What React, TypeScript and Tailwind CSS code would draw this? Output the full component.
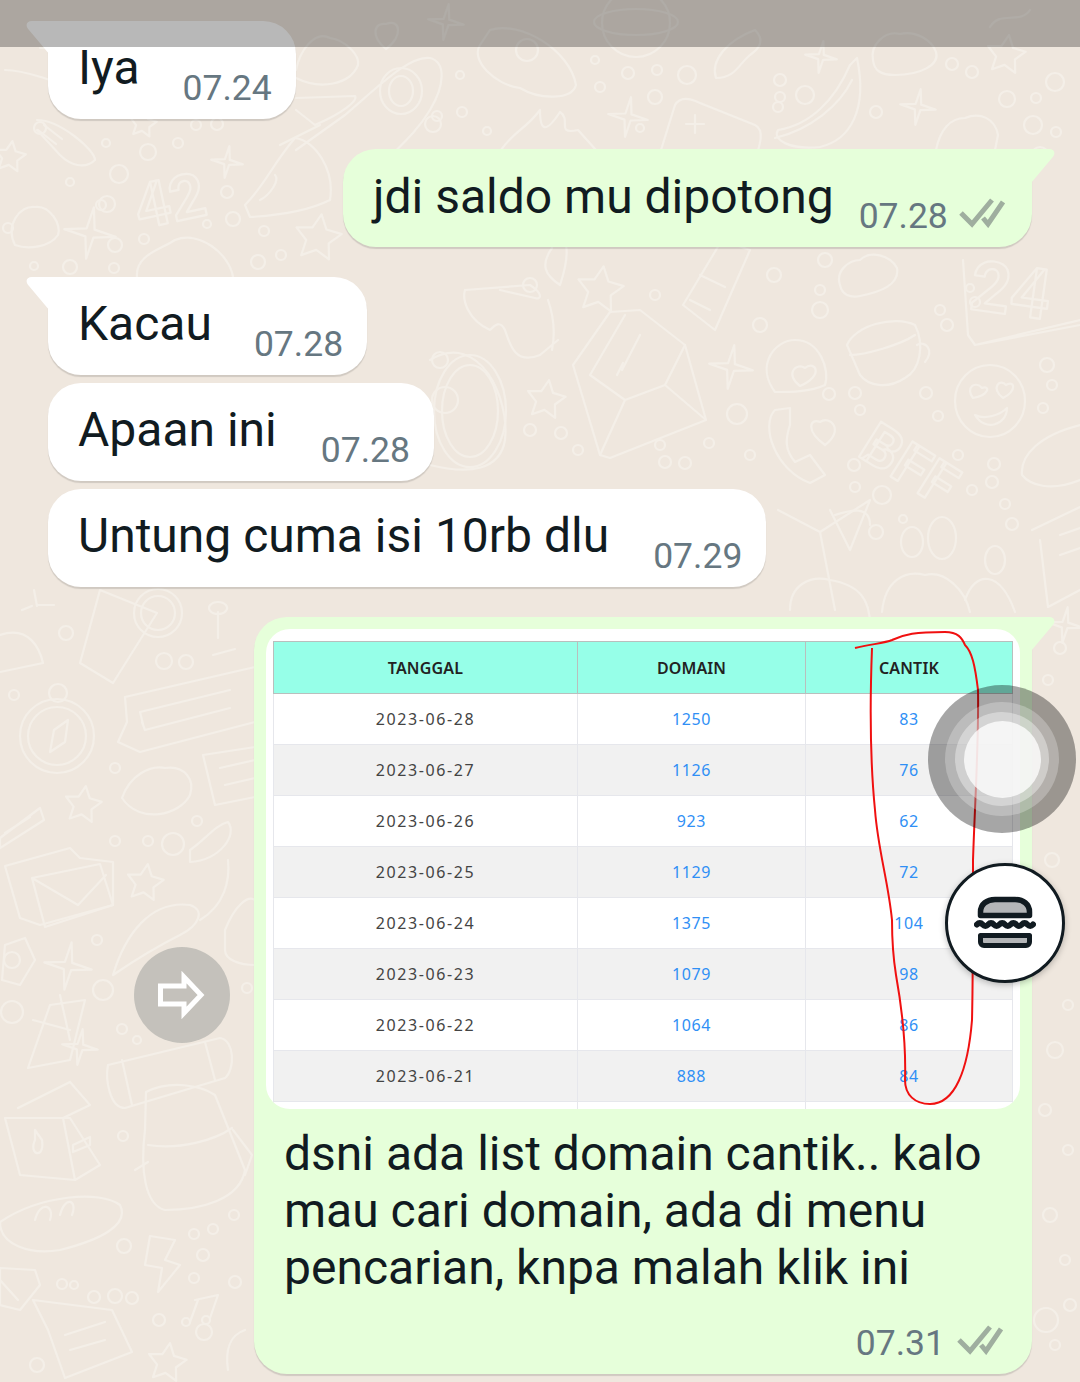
const font = "font-['Roboto',sans-serif]";

function Ticks({ className }: { className: string }) {
  return (
    <svg className={className} width="46" height="30" viewBox="0 0 46 30" fill="none" stroke="#9fae9f" strokeWidth="5">
      <path d="M2 15 L13 26 L33 2" />
      <path d="M24 20 L29 26 L44 4" />
    </svg>
  );
}

function TailLeft() {
  return (
    <svg className="absolute left-[-22px] top-0" width="24" height="34" viewBox="0 0 24 34">
      <path d="M24 0 H6 C0 0 -1 5 3 9 L24 34 Z" fill="#ffffff" />
    </svg>
  );
}

function TailRight() {
  return (
    <svg className="absolute right-[-23px] top-0" width="24" height="34" viewBox="0 0 24 34">
      <path d="M0 0 H18 C24 0 25 5 21 9 L0 34 Z" fill="#e6ffda" />
    </svg>
  );
}

function Incoming({ text, time, tail, timeGap, className }: { text: string; time: string; tail?: boolean; timeGap: string; className: string }) {
  return (
    <div className={`relative ml-12 flex h-[98px] w-fit rounded-[33px] bg-white pl-[30px] pr-[24px] shadow-[0_2px_1px_rgba(0,0,0,0.13)] ${tail ? 'rounded-tl-none' : ''} ${className}`}>
      {tail && <TailLeft />}
      <span className="mt-[19px] text-[48px] leading-[56px] text-[#111b21]">{text}</span>
      <span className={`mt-[46px] text-[35.5px] leading-[42px] text-[#667781] ${timeGap}`}>{time}</span>
    </div>
  );
}

const rows = [
  ['2023-06-28', '1250', '83'],
  ['2023-06-27', '1126', '76'],
  ['2023-06-26', '923', '62'],
  ['2023-06-25', '1129', '72'],
  ['2023-06-24', '1375', '104'],
  ['2023-06-23', '1079', '98'],
  ['2023-06-22', '1064', '86'],
  ['2023-06-21', '888', '84'],
];

function ScreenshotTable() {
  return (
    <div className="relative h-[480px] overflow-hidden rounded-[24px] bg-white pl-[7px] pr-[7px] pt-[12px] font-['Noto_Sans',sans-serif]">
      <div className="grid h-[53px] grid-cols-[304px_228px_208px] border border-[#b9bfbd] bg-[#96ffe8] text-[16px] font-semibold text-[#222]">
        <div className="flex items-center justify-center border-r border-[#b9bfbd] tracking-[0.2px]">TANGGAL</div>
        <div className="flex items-center justify-center border-r border-[#b9bfbd] tracking-[0.1px]">DOMAIN</div>
        <div className="flex items-center justify-center pr-[2px] tracking-[0.2px]">CANTIK</div>
      </div>
      {rows.map((r, i) => (
        <div key={r[0]} className={`grid h-[51px] grid-cols-[304px_228px_208px] border-x border-b border-[#e6e7ec] text-[16px] ${i % 2 ? 'bg-[#f1f1f1]' : 'bg-white'}`}>
          <div className="flex items-center justify-center border-r border-[#e6e7ec] tracking-[1.6px] text-[#444]">{r[0]}</div>
          <div className="flex items-center justify-center border-r border-[#e6e7ec] tracking-[0.6px] text-[#2f8ff5]">{r[1]}</div>
          <div className="flex items-center justify-center pr-[2px] tracking-[0.6px] text-[#2f8ff5]">{r[2]}</div>
        </div>
      ))}
      <div className="grid h-[20px] grid-cols-[304px_228px_208px] border-x border-[#e6e7ec]">
        <div className="border-r border-[#e6e7ec]" />
        <div className="border-r border-[#e6e7ec]" />
        <div />
      </div>
    </div>
  );
}

function starPath(x: number, y: number, r: number, inner: number, n: number) {
  let d = '';
  for (let i = 0; i < n * 2; i++) {
    const a = (Math.PI * i) / n - Math.PI / 2 + 0.15;
    const q = i % 2 ? r * inner : r;
    d += `${i ? 'L' : 'M'}${(x + q * Math.cos(a)).toFixed(1)} ${(y + q * Math.sin(a)).toFixed(1)} `;
  }
  return d + 'Z';
}

const stars = [[10, 157, 16], [318, 238, 24], [600, 290, 24], [546, 400, 20], [83, 805, 19], [145, 883, 19], [1006, 55, 20], [167, 1363, 20], [143, 124, 14]];
const sparkles = [[227, 162, 16], [90, 233, 26], [446, 22, 18], [628, 117, 20], [821, 57, 16], [918, 107, 18], [731, 367, 22], [68, 966, 24], [80, 1047, 18], [1065, 625, 18]];
const dots = [
  [40, 128, 6], [119, 174, 9], [70, 182, 4], [106, 143, 4], [148, 152, 8], [178, 143, 5], [217, 124, 6], [196, 125, 5],
  [107, 204, 8], [101, 205, 5], [207, 224, 4], [233, 219, 7], [227, 192, 6], [264, 231, 5], [115, 245, 7], [144, 239, 5],
  [258, 262, 7], [281, 255, 5], [70, 267, 7], [114, 268, 5], [34, 266, 4], [8, 228, 5],
  [460, 75, 4], [462, 112, 5], [487, 131, 4], [437, 116, 5], [433, 124, 8], [595, 60, 4], [628, 73, 6], [657, 70, 5], [687, 75, 9],
  [600, 87, 5], [655, 97, 7], [640, 128, 4], [780, 97, 5], [805, 95, 9], [780, 80, 6], [778, 107, 5], [876, 112, 6], [952, 64, 6],
  [972, 72, 6], [1055, 82, 9], [1007, 99, 8], [1036, 98, 5], [1033, 125, 9], [1056, 132, 5], [1040, 155, 8],
  [530, 285, 7], [655, 295, 5], [760, 325, 7], [774, 275, 7], [820, 310, 8], [825, 260, 7], [820, 290, 5], [940, 310, 5], [975, 302, 5],
  [970, 288, 4], [947, 325, 6], [1047, 365, 7], [1052, 385, 5], [1043, 408, 5], [737, 414, 10], [530, 430, 6], [561, 433, 6], [578, 450, 5],
  [660, 445, 5], [709, 443, 5], [685, 463, 6], [665, 462, 6], [750, 455, 5], [829, 394, 6], [855, 393, 6], [860, 410, 5], [926, 393, 6],
  [938, 416, 5], [958, 455, 5], [994, 464, 6], [992, 482, 6], [854, 465, 6], [855, 487, 5], [882, 495, 9], [972, 490, 5], [1005, 504, 5],
  [1012, 524, 6], [876, 532, 7], [903, 519, 4], [440, 360, 8],
  [66, 633, 7], [14, 695, 5], [164, 661, 8], [186, 662, 7], [115, 768, 5], [197, 821, 5], [115, 841, 5], [148, 841, 5], [173, 844, 11],
  [97, 940, 5], [103, 990, 10], [12, 1012, 11], [122, 1029, 5], [137, 1040, 4], [247, 988, 5], [123, 1136, 5], [234, 1215, 5], [194, 1234, 5],
  [213, 1229, 5], [203, 1255, 6], [194, 1278, 5], [235, 1282, 6], [124, 1246, 7], [74, 1285, 4], [94, 1297, 6], [115, 1296, 7], [62, 1284, 5],
  [132, 1298, 6], [159, 1320, 6], [204, 1332, 8], [37, 1365, 7],
  [1060, 648, 6], [1048, 680, 5], [1052, 860, 7], [1045, 905, 5], [1068, 1005, 5], [1055, 1050, 8], [1045, 1110, 6], [1068, 1150, 5], [1050, 1215, 7],
  [1065, 1260, 5], [1046, 1320, 12], [1070, 1305, 6], [1055, 1345, 5],
];

function Doodles() {
  return (
    <svg className="absolute inset-0" width="1080" height="1382" viewBox="0 0 1080 1382" fill="none" stroke="#f4efe8" strokeWidth="2.2" strokeLinejoin="round" strokeLinecap="round">
      {stars.map(([x, y, r]) => <path key={`s${x}`} d={starPath(x, y, r, 0.5, 5)} />)}
      {sparkles.map(([x, y, r]) => <path key={`k${x}`} d={starPath(x, y, r, 0.22, 4)} />)}
      {dots.map(([x, y, r], i) => <circle key={i} cx={x} cy={y} r={r} />)}

      {/* top strip */}
      <path d="M386 49 C370 36 374 22 386 24 C400 18 404 36 386 49 Z" />
      <circle cx="636" cy="23" r="34" /><ellipse cx="636" cy="22" rx="42" ry="13" />
      <path d="M490 30 C520 20 570 50 576 85 C572 100 540 100 520 88 C495 85 470 60 480 45 Z" />
      <circle cx="527" cy="50" r="11" />
      <path d="M296 150 L345 115 C380 85 410 55 430 58 C446 62 445 85 430 110 C415 135 395 150 375 172" />
      <ellipse cx="401" cy="91" rx="21" ry="23" /><ellipse cx="401" cy="91" rx="12" ry="15" />
      <path d="M296 98 L355 96 C358 100 345 112 315 125 L296 110" />
      <path d="M501 150 C515 130 525 130 540 110 C540 130 545 135 560 112 C572 120 555 135 578 130 L596 150" />
      <path d="M661 150 L675 105 C680 96 690 98 700 103 L755 125 C765 130 760 145 755 160" />
      <path d="M695 115 v18 M686 124 h18" />
      <path d="M716 78 C710 60 728 40 755 30 C765 40 760 48 750 55 C738 65 735 78 716 78 Z" />
      <path d="M857 58 C868 110 850 140 820 147 C790 150 772 140 778 130 C810 125 835 100 850 65 Z" />
      <path d="M775 138 C810 130 840 105 852 80" />
      <path d="M873 60 C870 45 885 30 900 34 C915 30 932 40 936 52 C940 65 920 75 895 75 C880 75 874 70 873 60 Z" />
      <path d="M936 150 C940 130 950 118 965 118 C980 112 995 118 998 135 L995 150" />
      <path d="M296 70 C300 50 315 30 330 38 C345 40 360 55 358 65 C350 85 320 90 296 78" />
      <path d="M990 27 C1000 10 1020 25 1030 10" />
      <path d="M40 48 C90 50 120 75 95 100 C60 80 20 70 5 70" />

      {/* left upper */}
      <path d="M37 120 C60 120 95 150 95 160 C85 170 70 165 60 155 L37 130" />
      <path d="M44 125 l18 14 M38 130 l18 14" />
      <text x="132" y="222" fontSize="62" fontFamily="Roboto" fontWeight="700" transform="rotate(-12 170 190)">42</text>
      <path d="M15 245 C5 225 20 205 35 207 C50 205 62 225 58 235 C50 247 28 250 15 245 Z" />
      <path d="M245 205 C265 185 272 165 295 138 C315 140 335 170 330 200 C310 210 285 215 250 217 Z" />
      <path d="M280 145 L320 125 M260 200 C270 195 280 180 275 175" />
      <path d="M137 277 C135 255 160 250 175 240 C200 230 230 255 233 277" />

      {/* centre */}
      <ellipse cx="470" cy="411" rx="36" ry="56" />
      <ellipse cx="470" cy="411" rx="28" ry="46" /><circle cx="445" cy="400" r="13" />
      <path d="M465 290 L530 285 C545 295 540 300 535 298 L500 290 M465 290 C462 300 468 320 490 330 C495 325 500 320 505 330 C510 345 515 365 540 355 L558 340 M548 300 C555 320 555 335 552 350" />
      <path d="M552 248 C540 265 545 275 560 285 C565 270 568 255 566 245" />
      <path d="M683 305 L722 240 L750 250 L715 330 Z M700 275 l25 12 M690 300 l20 10" />
      <path d="M573 365 L610 312 L640 310 L685 345 L706 420 L610 458 L600 455 Z" />
      <path d="M590 375 L625 315 M590 375 L625 400 L665 385 L685 345 M625 400 L600 455 M665 385 L706 420" />
      <path d="M622 370 l18 -35 M617 375 l6 -12" />
      <path d="M775 392 C755 365 775 340 795 340 C820 340 830 370 825 385 C810 392 790 392 775 392 Z" />
      <path d="M800 386 C785 375 795 362 805 368 C815 360 825 375 800 386 Z" />
      <path d="M847 345 C855 325 895 315 915 325 C925 345 920 370 905 378 C890 388 870 388 860 375 Z" />
      <path d="M850 355 C865 355 900 345 915 335 M917 345 C925 340 935 350 925 362" />
      <path d="M840 285 C835 270 850 260 860 260 C870 250 890 255 897 268 C900 285 880 292 860 296 C850 298 842 295 840 285 Z" />
      <path d="M963 260 L968 335 L975 345 L1080 325 M975 345 L1080 320" />
      <text x="972" y="313" fontSize="70" fontFamily="Roboto" fontWeight="700" transform="rotate(8 1000 280)">24</text>
      <ellipse cx="990" cy="401" rx="35" ry="36" />
      <path d="M975 415 C985 420 1000 415 1007 408 C1007 425 985 432 975 415 Z" />
      <path d="M973 398 C965 388 975 380 982 388 C990 385 990 395 973 398 Z M1003 398 C990 388 1000 378 1006 385 C1014 380 1018 390 1003 398 Z" />
      <path d="M775 410 C760 425 775 470 810 483 L825 475 L810 455 L795 462 C785 450 785 440 790 425 L790 408 Z" />
      <path d="M825 445 C805 430 810 418 820 422 C830 415 845 430 825 445 Z" />
      <text x="866" y="480" fontSize="58" fontFamily="Roboto" fontWeight="700" transform="rotate(32 905 450)">BFF</text>
      <path d="M1080 425 C1040 435 1020 455 1022 475 C1030 485 1050 492 1080 480" />
      <path d="M430 360 C480 330 510 400 505 440 C500 470 470 475 430 465" />
      <path d="M778 510 L820 532 L870 500 L850 550 L830 510 M820 532 L835 610" />
      <path d="M870 525 C870 505 850 510 835 515" />
      <path d="M790 610 C790 585 810 575 830 580 C860 585 870 600 870 625" />
      <path d="M882 612 C885 580 905 570 925 575 C945 570 965 590 970 612 M965 600 C975 570 1000 570 1015 612" />
      <ellipse cx="912" cy="542" rx="11" ry="15" /><ellipse cx="942" cy="538" rx="14" ry="21" /><ellipse cx="995" cy="560" rx="10" ry="14" />
      <path d="M1032 530 L1080 507 M1040 540 L1048 607 L1080 590 M1060 535 l20 -7 M1060 555 l20 -7" />

      {/* left column */}
      <path d="M100 590 L157 613 L113 683 L80 663 Z" /><circle cx="158" cy="613" r="24" /><circle cx="158" cy="613" r="17" />
      <path d="M218 602 a9 6 0 1 0 0.1 0 M218 612 v26 M213 655 l22 -6" />
      <path d="M0 635 C30 625 40 650 43 663 L0 672" />
      <path d="M38 605 h16 M22 610 l10 -4 M34 590 l3 16" />
      <circle cx="57" cy="736" r="37" /><circle cx="57" cy="736" r="29" /><circle cx="58" cy="693" r="9" />
      <path d="M50 752 L54 730 L68 720 L65 742 Z" />
      <path d="M125 697 L255 667 M125 697 L127 722 L118 742 L140 752 L255 722" />
      <path d="M140 712 L230 690 M145 730 L230 708 M140 712 l3 12 M145 730 l-3 -8" />
      <path d="M203 755 L255 747 M203 755 L215 805 L255 797 M220 768 L255 760 M225 785 L255 778" />
      <path d="M122 798 C130 775 150 765 165 768 C185 765 195 780 190 795 C180 815 140 825 122 798 Z" />
      <path d="M0 838 L40 808 L44 820 L0 848 Z M5 833 L30 817" />
      <path d="M190 850 C205 840 215 825 228 822 C238 835 220 860 190 862 Z" />
      <path d="M5 866 L70 848 L80 858 L113 862 L113 905 L40 925 L20 918 Z" />
      <path d="M32 878 L100 864 L113 905 L45 927 Z M32 878 L78 905 L106 875" />
      <path d="M228 860 C230 880 225 905 200 920 M113 975 C125 935 150 900 190 905 C205 910 200 925 180 935 C160 945 135 960 113 975 Z" />
      <path d="M225 930 C235 905 248 895 255 900 L255 965 C240 965 225 960 225 950 Z" />
      <path d="M5 945 L25 938 L35 960 L20 985 L2 980 Z" /><circle cx="12" cy="960" r="8" />
      <path d="M50 1005 L85 1000 L70 1060 L28 1068 Z M33 1020 L70 1030 M60 995 L70 1040" />
      <path d="M108 1065 L220 1038 C235 1040 235 1070 225 1078 L125 1108 C110 1108 105 1080 108 1065 Z M122 1060 l10 45 M205 1042 l10 38" />
      <path d="M146 1092 C170 1080 200 1085 215 1095 L245 1170 C240 1200 200 1210 165 1210 C145 1205 140 1170 145 1130 Z" />
      <path d="M148 1145 C180 1150 215 1140 232 1128 M135 1170 L148 1162 M233 1130 L252 1155 L245 1175" />
      <path d="M18 1108 L70 1082 M5 1118 L70 1118 L100 1165 L75 1180 L20 1175 Z M63 1118 L75 1180 M18 1108 L70 1082 L90 1105 L63 1118" />
      <path d="M35 1140 C28 1155 45 1160 42 1140 L35 1130 Z M73 1145 L90 1137 L90 1145 L73 1152 Z" />
      <path d="M0 1222 C40 1195 100 1190 120 1205 C130 1225 100 1240 60 1250 C30 1255 0 1245 0 1222 Z M35 1220 C40 1200 55 1205 50 1220 M60 1215 C65 1195 78 1200 72 1215" />
      <path d="M150 1236 L175 1240 L165 1260 L180 1265 L158 1292 L162 1268 L145 1265 Z" />
      <path d="M195 1300 L218 1295 L210 1318 M198 1300 L190 1322" /><circle cx="186" cy="1322" r="4" /><circle cx="206" cy="1320" r="4" />
      <path d="M33 1300 L112 1310 L132 1352 L65 1378 L48 1330 Z M65 1335 L105 1322 M70 1350 L105 1340" />
      <path d="M0 1268 L35 1270 L40 1285 L20 1310 L0 1305 Z M0 1280 L18 1300" />
      <path d="M245 1330 C230 1335 225 1350 228 1370" />
    </svg>
  );
}

function Burger() {
  return (
    <svg width="62" height="56" viewBox="0 0 62 56">
      <path d="M6.5 20.5 V17 C6.5 9 13 4.5 21 4.5 H41 C49 4.5 55.5 9 55.5 17 V20.5 Z" fill="#b4b6b8" stroke="#111b21" strokeWidth="5.5" strokeLinejoin="round" />
      <path d="M3 29.5 q2.8 -3 5.6 0 t5.6 0 t5.6 0 t5.6 0 t5.6 0 t5.6 0 t5.6 0 t5.6 0 t5.6 0 t5.6 0" fill="none" stroke="#111b21" strokeWidth="6" strokeLinecap="round" />
      <path d="M6.5 40.5 H55.5 V47 C55.5 49 54 50.5 52 50.5 H10 C8 50.5 6.5 49 6.5 47 Z" fill="#b4b6b8" stroke="#111b21" strokeWidth="5" strokeLinejoin="round" />
    </svg>
  );
}

export default function App() {
  return (
    <div className={`relative h-[1382px] w-[1080px] overflow-hidden bg-[#efe7de] ${font}`}>
      <Doodles />
      <div className="relative flex flex-col pt-[21px]">
        <Incoming text="Iya" time="07.24" tail timeGap="ml-[43px]" className="" />

        <div className="relative ml-[343px] mt-[30px] flex h-[98px] w-[689px] rounded-[33px] rounded-tr-none bg-[#e6ffda] pl-[30px] shadow-[0_2px_1px_rgba(0,0,0,0.13)]">
          <TailRight />
          <span className="mt-[20px] text-[48px] leading-[56px] text-[#111b21]">jdi saldo mu dipotong</span>
          <span className="ml-[25px] mt-[46px] text-[35.5px] leading-[42px] text-[#667781]">07.28</span>
          <Ticks className="ml-[11px] mt-[49px]" />
        </div>

        <Incoming text="Kacau" time="07.28" tail timeGap="ml-[42px]" className="mt-[30px]" />
        <Incoming text="Apaan ini" time="07.28" timeGap="ml-[44px]" className="mt-2" />
        <Incoming text="Untung cuma isi 10rb dlu" time="07.29" timeGap="ml-[44px]" className="mt-2" />

        <div className="relative ml-[254px] mt-[30px] h-[757px] w-[778px] rounded-[33px] rounded-tr-none bg-[#e6ffda] px-3 pt-3 shadow-[0_2px_1px_rgba(0,0,0,0.13)]">
          <TailRight />
          <ScreenshotTable />
          <p className="ml-[18px] mt-[16px] text-[48px] leading-[57px] text-[#111b21]">
            dsni ada list domain cantik.. kalo
            <br />
            mau cari domain, ada di menu
            <br />
            pencarian, knpa malah klik ini
          </p>
          <div className="mt-[26px] flex justify-end pr-[17px]">
            <span className="text-[35.5px] leading-[42px] text-[#667781]">07.31</span>
            <Ticks className="ml-[12px] mt-[3px]" />
          </div>
        </div>
      </div>

      {/* red marker drawn over the shared picture */}
      <svg className="absolute left-0 top-0" width="1080" height="1382" fill="none" stroke="#f01010" strokeWidth="2">
        <path d="M855 648 C872 644 885 643 892 640 C905 634 915 632 945 632 C958 632 962 638 965 645 C972 652 975 665 978 690 C979 740 975 800 973 860 C973 920 973 980 972 1020 C968 1070 955 1104 930 1104 C915 1104 905 1095 905 1080 C906 1050 904 1020 896 975 C892 950 892 935 892 920 C888 880 878 850 875 810 C870 760 870 700 872 648" />
      </svg>

      {/* dimmed status bar */}
      <div className="absolute left-0 top-0 h-[47px] w-full bg-[rgba(0,0,0,0.28)]" />

      {/* forward button */}
      <div className="absolute left-[134px] top-[947px] flex h-24 w-24 items-center justify-center rounded-full bg-[rgba(96,107,106,0.3)]">
        <svg width="48" height="48" viewBox="0 0 48 48" fill="none" stroke="#ffffff" strokeWidth="5">
          <path d="M2.5 15 H26 V6 L43 24 L26 42 V33 H2.5 Z" />
        </svg>
      </div>

      {/* floating assistive touch */}
      <div className="absolute left-[928px] top-[685px] flex h-[148px] w-[148px] items-center justify-center rounded-full bg-[rgba(0,0,0,0.35)]">
        <div className="flex h-[114px] w-[114px] items-center justify-center rounded-full bg-[rgba(255,255,255,0.25)]">
          <div className="flex h-[94px] w-[94px] items-center justify-center rounded-full bg-[rgba(255,255,255,0.37)]">
            <div className="h-[77px] w-[77px] rounded-full bg-[rgba(255,255,255,0.76)]" />
          </div>
        </div>
      </div>

      {/* burger button */}
      <div className="absolute left-[945px] top-[863px] flex h-[120px] w-[120px] items-center justify-center rounded-full border-[3px] border-[#111b21] bg-white shadow-[0_2px_6px_rgba(0,0,0,0.25)]">
        <Burger />
      </div>
    </div>
  );
}
